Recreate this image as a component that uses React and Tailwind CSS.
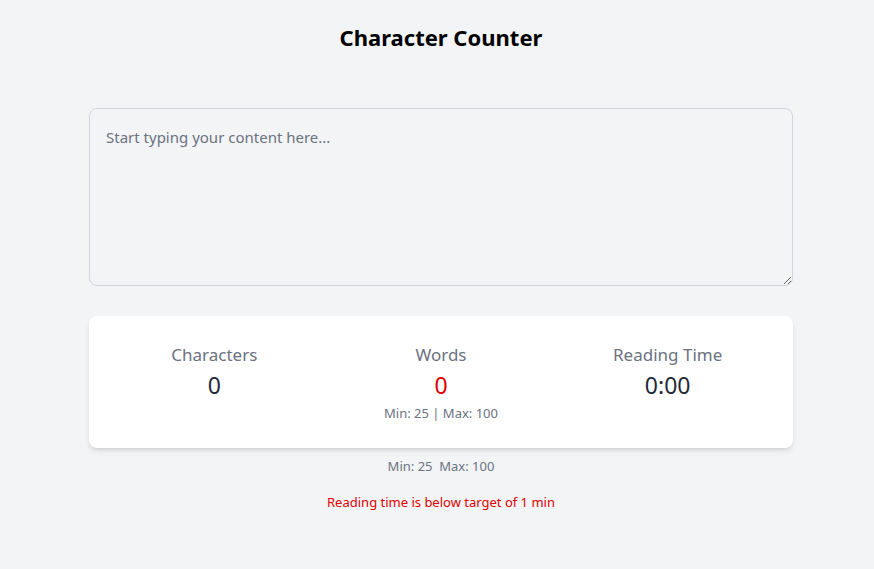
import { useState } from 'react';

export default function App() {
  const [text, setText] = useState('');

  const chars = text.length;
  const words = text.trim() ? text.trim().split(/\s+/).length : 0;
  const secs = Math.round((words / 200) * 60);
  const readTime = `${Math.floor(secs / 60)}:${String(secs % 60).padStart(2, '0')}`;
  const wordsOk = words >= 25 && words <= 100;

  return (
    <div className="min-h-screen bg-[#f3f4f6] pl-2 font-['Noto_Sans','Open_Sans',sans-serif]">
      <div className="w-[704px] mx-auto pt-[21px]">
        <h1 className="text-center text-[22px] font-bold text-black leading-8">Character Counter</h1>

        <textarea
          value={text}
          onChange={(e) => setText(e.target.value)}
          placeholder="Start typing your content here..."
          className="block w-full h-[178px] mt-[55px] px-4 py-4 text-[15px] leading-6 bg-[#f3f4f6] border border-[#d1d5db] rounded-lg text-gray-800 placeholder:text-[#6b7280] focus:outline-none"
        />

        <div className="mt-[30px] bg-white rounded-lg shadow-md px-3 pt-[25px] pb-[25px] grid grid-cols-3">
          <div className="flex flex-col items-center">
            <span className="text-[17px] leading-7 text-[#6b7280]">Characters</span>
            <span className="text-[23px] leading-8 text-[#1f2937]">{chars}</span>
          </div>
          <div className="flex flex-col items-center">
            <span className="text-[17px] leading-7 text-[#6b7280]">Words</span>
            <span className={`text-[23px] leading-8 ${wordsOk ? 'text-[#1f2937]' : 'text-[#e00000]'}`}>{words}</span>
            <span className="text-[13px] leading-5 text-[#6b7280] mt-0.5">Min: 25 | Max: 100</span>
          </div>
          <div className="flex flex-col items-center">
            <span className="text-[17px] leading-7 text-[#6b7280]">Reading Time</span>
            <span className="text-[23px] leading-8 text-[#1f2937]">{readTime}</span>
          </div>
        </div>

        <p className="mt-2 text-center text-[13px] leading-5 text-[#6b7280] whitespace-pre">Min: 25  Max: 100</p>
        <p className="mt-4 text-center text-[13px] leading-5 text-[#e00000]">
          {secs < 60 ? 'Reading time is below target of 1 min' : ''}
        </p>
      </div>
    </div>
  );
}
